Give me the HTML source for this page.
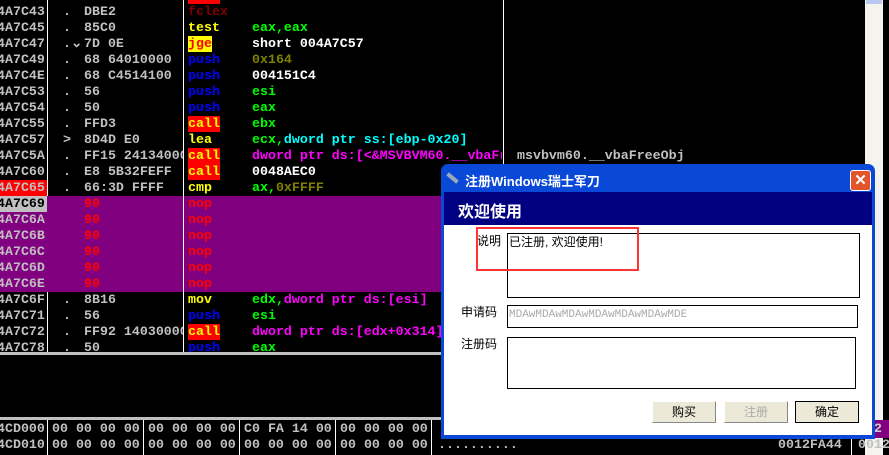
<!DOCTYPE html><html><head><meta charset="utf-8"><style>
body{margin:0;width:889px;height:455px;background:#000;overflow:hidden;position:relative;font-family:"Liberation Mono",monospace;font-weight:bold;font-size:13.3px;}
.r{position:absolute;left:0;width:865px;height:16px;line-height:16px;white-space:pre;color:#c0c0c0}
.r span{position:absolute}
.a{left:-3px}.d{left:63px}.h{left:84px}.m{left:188px}.o{left:252px}
.vl{position:absolute;top:0;width:1px;background:#fff}
.cn{font-family:"Liberation Sans","Noto Sans CJK SC",sans-serif;font-weight:normal}
</style></head><body>
<div class="vl" style="left:47px;height:352px"></div>
<div class="vl" style="left:183px;height:352px"></div>
<div class="vl" style="left:503px;height:164px"></div>
<div style="position:absolute;left:188px;top:0;width:32px;height:4px;background:#f00"></div>

<div class="r" style="top:4px"><span class="a">4A7C43</span><span class="d">.</span><span class="h">DBE2</span><span class="m" style="color:#800000">fclex</span></div>
<div class="r" style="top:20px"><span class="a">4A7C45</span><span class="d">.</span><span class="h">85C0</span><span class="m" style="color:#ff0">test</span><span class="o" style="color:#0f0">eax,eax</span></div>
<div class="r" style="top:36px"><span class="a">4A7C47</span><span class="d">.&#8964;</span><span class="h">7D 0E</span><span class="m" style="color:#f00;background:#ff0">jge</span><span class="o" style="color:#fff">short 004A7C57</span></div>
<div class="r" style="top:52px"><span class="a">4A7C49</span><span class="d">.</span><span class="h">68 64010000</span><span class="m" style="color:#00f">push</span><span class="o" style="color:#808000">0x164</span></div>
<div class="r" style="top:68px"><span class="a">4A7C4E</span><span class="d">.</span><span class="h">68 C4514100</span><span class="m" style="color:#00f">push</span><span class="o" style="color:#fff">004151C4</span></div>
<div class="r" style="top:84px"><span class="a">4A7C53</span><span class="d">.</span><span class="h">56</span><span class="m" style="color:#00f">push</span><span class="o" style="color:#0f0">esi</span></div>
<div class="r" style="top:100px"><span class="a">4A7C54</span><span class="d">.</span><span class="h">50</span><span class="m" style="color:#00f">push</span><span class="o" style="color:#0f0">eax</span></div>
<div class="r" style="top:116px"><span class="a">4A7C55</span><span class="d">.</span><span class="h">FFD3</span><span class="m" style="color:#ff0;background:#f00;width:32px">call</span><span class="o" style="color:#0f0">ebx</span></div>
<div class="r" style="top:132px"><span class="a">4A7C57</span><span class="d">&gt;</span><span class="h">8D4D E0</span><span class="m" style="color:#ff0">lea</span><span class="o" style="color:#0f0">ecx,<span style="position:static;color:#0ff">dword ptr ss:[ebp-0x20]</span></span></div>
<div class="r" style="top:148px"><span class="a">4A7C5A</span><span class="d">.</span><span class="h" style="width:99px;overflow:hidden">FF15 24134000</span><span class="m" style="color:#ff0;background:#f00;width:32px">call</span><span class="o" style="color:#f0f;width:250px;overflow:hidden">dword ptr ds:[&lt;&amp;MSVBVM60.__vbaFr</span><span style="left:517px;color:#c0c0c0">msvbvm60.__vbaFreeObj</span></div>
<div class="r" style="top:164px"><span class="a">4A7C60</span><span class="d">.</span><span class="h">E8 5B32FEFF</span><span class="m" style="color:#ff0;background:#f00;width:32px">call</span><span class="o" style="color:#fff">0048AEC0</span></div>
<div class="r" style="top:180px"><span class="a" style="background:#f00;width:50px;color:#c0c0c0">4A7C65</span><span class="d">.</span><span class="h">66:3D FFFF</span><span class="m" style="color:#ff0">cmp</span><span class="o" style="color:#0f0">ax,<span style="position:static;color:#808000">0xFFFF</span></span></div>
<div style="position:absolute;left:0;top:196px;width:441px;height:96px;background:#800080"></div>
<div style="position:absolute;left:183px;top:196px;width:1px;height:96px;background:#fff"></div>
<div class="r" style="top:196px"><span class="a" style="background:#c0c0c0;color:#000;width:50px">4A7C69</span><span class="h" style="color:#f00">90</span><span class="m" style="color:#f00">nop</span></div>
<div class="r" style="top:212px"><span class="a">4A7C6A</span><span class="h" style="color:#f00">90</span><span class="m" style="color:#f00">nop</span></div>
<div class="r" style="top:228px"><span class="a">4A7C6B</span><span class="h" style="color:#f00">90</span><span class="m" style="color:#f00">nop</span></div>
<div class="r" style="top:244px"><span class="a">4A7C6C</span><span class="h" style="color:#f00">90</span><span class="m" style="color:#f00">nop</span></div>
<div class="r" style="top:260px"><span class="a">4A7C6D</span><span class="h" style="color:#f00">90</span><span class="m" style="color:#f00">nop</span></div>
<div class="r" style="top:276px"><span class="a">4A7C6E</span><span class="h" style="color:#f00">90</span><span class="m" style="color:#f00">nop</span></div>
<div class="r" style="top:292px"><span class="a">4A7C6F</span><span class="d">.</span><span class="h">8B16</span><span class="m" style="color:#ff0">mov</span><span class="o" style="color:#0f0">edx,<span style="position:static;color:#f0f">dword ptr ds:[esi]</span></span></div>
<div class="r" style="top:308px"><span class="a">4A7C71</span><span class="d">.</span><span class="h">56</span><span class="m" style="color:#00f">push</span><span class="o" style="color:#0f0">esi</span></div>
<div class="r" style="top:324px"><span class="a">4A7C72</span><span class="d">.</span><span class="h" style="width:99px;overflow:hidden">FF92 14030000</span><span class="m" style="color:#ff0;background:#f00;width:32px">call</span><span class="o" style="color:#f0f">dword ptr ds:[edx+0x314]</span></div>
<div class="r" style="top:340px;height:12px;overflow:hidden"><span class="a">4A7C78</span><span class="d">.</span><span class="h">50</span><span class="m" style="color:#00f">push</span><span class="o" style="color:#0f0">eax</span></div>
<div style="position:absolute;left:0;top:352px;width:441px;height:3px;background:#c0c0c0"></div>
<div style="position:absolute;left:0;top:417px;width:441px;height:3px;background:#c0c0c0"></div>
<div class="vl" style="left:47px;top:420px;height:35px"></div>
<div class="vl" style="left:143px;top:420px;height:35px"></div>
<div class="vl" style="left:239px;top:420px;height:35px"></div>
<div class="vl" style="left:335px;top:420px;height:35px"></div>
<div class="vl" style="left:431px;top:420px;height:35px"></div>
<div class="r" style="top:421px"><span class="a">4CD000</span><span style="left:52px">00 00 00 00</span><span style="left:148px">00 00 00 00</span><span style="left:244px">C0 FA 14 00</span><span style="left:340px">00 00 00 00</span></div>
<div class="r" style="top:437px"><span class="a">4CD010</span><span style="left:52px">00 00 00 00</span><span style="left:148px">00 00 00 00</span><span style="left:244px">00 00 00 00</span><span style="left:340px">00 00 00 00</span><span style="left:438px">..........</span></div>
<div style="position:absolute;left:865px;top:0;width:18px;height:455px;background:#f4f3ee"></div>
<div style="position:absolute;left:866px;top:0;width:16px;height:4px;background:#b8c8f0"></div>
<div style="position:absolute;left:866px;top:420px;width:23px;height:18px;background:#800080;color:#ccc;line-height:18px">12</div>
<div class="r" style="top:437px"><span style="left:778px">0012FA44</span><span style="left:858px">0012</span></div>
<div class="vl" style="left:851px;top:437px;height:18px"></div>

<!-- dialog -->
<div style="position:absolute;left:441px;top:164px;width:434px;height:275px;background:#0a49d8;border-radius:7px 7px 0 0"></div>
<div style="position:absolute;left:444px;top:192px;width:428px;height:243px;background:#fff"></div>
<div style="position:absolute;left:444px;top:192px;width:428px;height:33px;background:#000080"></div>
<div class="cn" style="position:absolute;left:465px;top:171px;color:#fff;font-size:13px;font-weight:bold">注册Windows瑞士军刀</div>
<div style="position:absolute;left:446px;top:176px;width:13px;height:4px;background:#9ab;transform:rotate(40deg)"></div>
<div style="position:absolute;left:850px;top:170px;width:19px;height:19px;background:#e2542c;border:1px solid #fff;border-radius:3px;color:#fff;font:bold 15px/19px 'Liberation Sans';text-align:center">✕</div>
<div class="cn" style="position:absolute;left:458px;top:198px;color:#fff;font-size:16px;font-weight:bold">欢迎使用</div>
<div class="cn" style="position:absolute;left:477px;top:232px;font-size:12px">说明</div>
<div class="cn" style="position:absolute;left:461px;top:303px;font-size:12px">申请码</div>
<div class="cn" style="position:absolute;left:461px;top:335px;font-size:12px">注册码</div>
<div style="position:absolute;left:507px;top:233px;width:351px;height:63px;border:1px solid #000"></div>
<div class="cn" style="position:absolute;left:509px;top:233px;font-size:12px">已注册, 欢迎使用!</div>
<div style="position:absolute;left:476px;top:227px;width:159px;height:40px;border:2px solid #f33"></div>
<div style="position:absolute;left:507px;top:305px;width:349px;height:21px;border:1px solid #000"></div>
<div style="position:absolute;left:509px;top:306px;font-weight:normal;font-size:11px;color:#aaa;line-height:18px">MDAwMDAwMDAwMDAwMDAwMDAwMDE</div>
<div style="position:absolute;left:507px;top:337px;width:347px;height:50px;border:1px solid #000"></div>
<div class="cn" style="position:absolute;left:652px;top:401px;width:62px;height:20px;background:#ece9d8;border:1px solid #fff;border-right-color:#888;border-bottom-color:#888;text-align:center;line-height:20px;font-size:12px">购买</div>
<div class="cn" style="position:absolute;left:724px;top:401px;width:62px;height:20px;background:#ece9d8;border:1px solid #fff;border-right-color:#888;border-bottom-color:#888;text-align:center;line-height:20px;font-size:12px;color:#aaa">注册</div>
<div class="cn" style="position:absolute;left:795px;top:401px;width:62px;height:20px;background:#ece9d8;border:1px solid #000;text-align:center;line-height:20px;font-size:12px">确定</div>
</body></html>
